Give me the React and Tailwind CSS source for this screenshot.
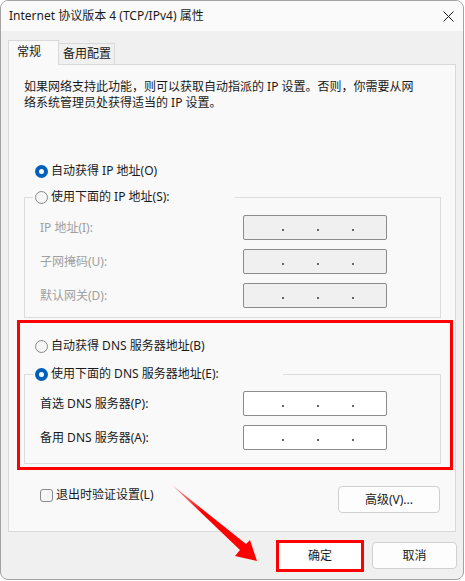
import React from "react";

const Radio = ({ checked }) =>
  checked ? (
    <span className="w-[13px] h-[13px] rounded-full bg-[#005fb8] flex items-center justify-center shrink-0">
      <span className="w-[5px] h-[5px] rounded-full bg-white" />
    </span>
  ) : (
    <span className="w-[13px] h-[13px] rounded-full border border-[#8a8a8a] bg-[#f6f6f6] shrink-0" />
  );

const IpBox = ({ disabled }) => (
  <div
    className={
      "w-[144px] h-[25px] border border-[#8b8b8b] rounded-[2px] flex items-center pl-[38px] gap-[33px] " +
      (disabled ? "bg-[#f0f0f0]" : "bg-white")
    }
  >
    <span className="w-[2px] h-[2px] mt-[4px] bg-[#666]" />
    <span className="w-[2px] h-[2px] mt-[4px] bg-[#666]" />
    <span className="w-[2px] h-[2px] mt-[4px] bg-[#666]" />
  </div>
);

const Row = ({ label, disabled }) => (
  <div className="flex items-center h-[25px]">
    <span className={"w-[218px] pl-[15px] " + (disabled ? "text-[#a0a0a0]" : "text-[#1a1a1a]")}>{label}</span>
    <IpBox disabled={disabled} />
  </div>
);

export default function App() {
  return (
    <div className="relative w-[465px] h-[581px] bg-white font-['Noto_Sans','Noto_Sans_CJK_SC',sans-serif] text-[12px] leading-[16px] text-[#1a1a1a]">
      <div className="w-[464px] h-[580px] border border-[#a3a3a3] rounded-lg overflow-hidden bg-[#f0f0f0] flex flex-col">
        {/* title bar */}
        <div className="h-[30px] bg-[#fafafa] flex items-center justify-between pl-[8px] pr-[8px] shrink-0">
          <span>Internet 协议版本 4 (TCP/IPv4) 属性</span>
          <svg width="11" height="11" viewBox="0 0 11 11" className="mr-[1px]">
            <path d="M0.5 0.5 L10.5 10.5 M10.5 0.5 L0.5 10.5" stroke="#1a1a1a" strokeWidth="1" />
          </svg>
        </div>

        <div className="px-[7px] pt-[9px]">
          {/* tabs */}
          <div className="flex items-end h-[24px]">
            <div className="relative z-10 w-[51px] h-[25px] -mb-[1px] bg-[#f9f9f9] border border-b-0 border-[#d9d9d9] pl-[8px] pt-[3px]">
              常规
            </div>
            <div className="w-[56px] h-[21px] bg-[#f0f0f0] border border-l-0 border-b-0 border-[#d9d9d9] pl-[4px] pt-[2px]">
              备用配置
            </div>
          </div>

          {/* panel */}
          <div className="h-[468px] bg-[#f9f9f9] border border-[#d9d9d9] pt-[14px]">
            <p className="pl-[15px]">
              如果网络支持此功能，则可以获取自动指派的 IP 设置。否则，你需要从网
              <br />
              络系统管理员处获得适当的 IP 设置。
            </p>

            <div className="mt-[52px] pl-[26px] flex items-center gap-[3px]">
              <Radio checked />
              <span>自动获得 IP 地址(O)</span>
            </div>

            <fieldset className="mt-[10px] ml-[15px] w-[417px] border border-[#dcdcdc] pt-[10px] pb-[9px] flex flex-col gap-[9px]">
              <legend className="ml-[8px] w-[202px] pl-[2px] flex items-center gap-[3px]">
                <Radio />
                <span>使用下面的 IP 地址(S):</span>
              </legend>
              <Row label="IP 地址(I):" disabled />
              <Row label="子网掩码(U):" disabled />
              <Row label="默认网关(D):" disabled />
            </fieldset>

            {/* DNS section, highlighted */}
            <div className="mt-[2px] ml-[8px] w-[436px] border-[3px] border-[#ff0000] pt-[15px] pb-[3px]">
              <div className="pl-[15px] flex items-center gap-[3px]">
                <Radio />
                <span>自动获得 DNS 服务器地址(B)</span>
              </div>
              <fieldset className="mt-[12px] ml-[4px] w-[417px] border border-[#dcdcdc] pt-[9px] pb-[13px] flex flex-col gap-[9px]">
                <legend className="ml-[8px] w-[250px] pl-[2px] flex items-center gap-[3px]">
                  <Radio checked />
                  <span>使用下面的 DNS 服务器地址(E):</span>
                </legend>
                <Row label="首选 DNS 服务器(P):" />
                <Row label="备用 DNS 服务器(A):" />
              </fieldset>
            </div>

            <div className="mt-[16px] pl-[31px] pr-[15px] flex items-start justify-between">
              <div className="flex items-center gap-[3px] pt-[1px]">
                <span className="w-[13px] h-[13px] rounded-[3px] border border-[#8a8a8a] bg-[#f6f6f6]" />
                <span>退出时验证设置(L)</span>
              </div>
              <button className="w-[102px] h-[27px] bg-[#fdfdfd] border border-[#d0d0d0] rounded-[4px]">
                高级(V)...
              </button>
            </div>
          </div>
        </div>

        {/* footer */}
        <div className="flex-1 flex items-center justify-end gap-[8px] pr-[6px]">
          <button className="w-[88px] h-[32px] bg-white border-[3px] border-[#ff0000]">确定</button>
          <button className="w-[85px] h-[27px] bg-[#fdfdfd] border border-[#d0d0d0] rounded-[4px]">取消</button>
        </div>
      </div>

      {/* annotation arrow */}
      <svg className="absolute left-0 top-0 pointer-events-none" width="465" height="581" viewBox="0 0 465 581">
        <defs>
          <linearGradient id="tail" x1="172" y1="485" x2="257" y2="561" gradientUnits="userSpaceOnUse">
            <stop offset="0" stopColor="#ff0000" stopOpacity="0.35" />
            <stop offset="0.35" stopColor="#ff0000" />
            <stop offset="1" stopColor="#ff0000" />
          </linearGradient>
        </defs>
        <path d="M172 485 L246 544 L250 540 L257 561 L235 556 L240 550 Z" fill="url(#tail)" />
      </svg>
    </div>
  );
}
